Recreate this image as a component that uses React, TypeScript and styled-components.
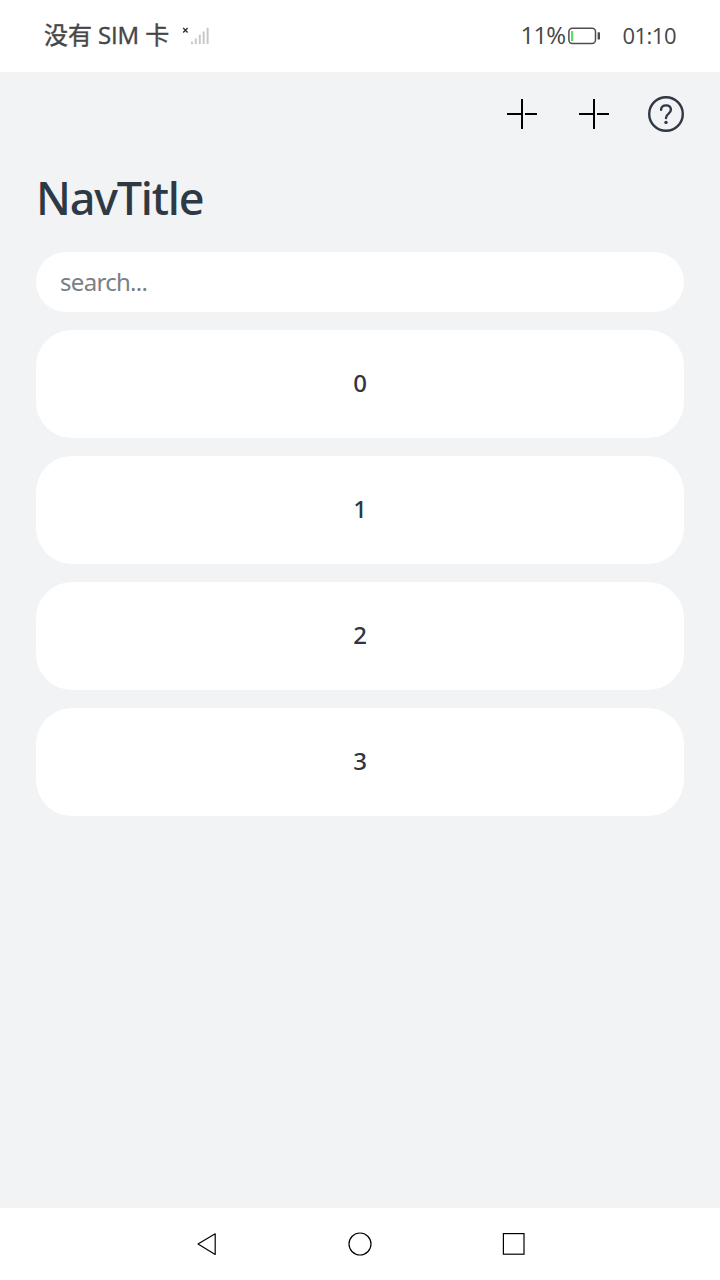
import React from "react";
import styled, { createGlobalStyle } from "styled-components";

const GlobalStyle = createGlobalStyle`
  * { box-sizing: border-box; }
  body {
    margin: 0;
    background: #f1f3f5;
    font-family: "Noto Sans", "Noto Sans CJK SC", sans-serif;
  }
`;

const Screen = styled.div`
  display: flex;
  flex-direction: column;
  width: 720px;
  height: 1280px;
  background: #f1f3f5;
  overflow: hidden;
`;

const StatusBar = styled.header`
  display: flex;
  align-items: center;
  justify-content: space-between;
  height: 72px;
  padding: 0 44px;
  background: #fff;
  color: #464646;
`;

const StatusGroup = styled.div`
  display: flex;
  align-items: center;
`;

const StatusText = styled.span<{ $size: number; $spacing?: number; $stroke?: number }>`
  padding-bottom: 2px;
  font-family: "Open Sans", "Noto Sans CJK SC", sans-serif;
  font-size: ${(p) => p.$size}px;
  font-weight: 400;
  -webkit-text-stroke: ${(p) => p.$stroke ?? 0}px currentColor;
  letter-spacing: ${(p) => p.$spacing ?? 0}px;
  line-height: 32px;
  white-space: pre;
`;

const SignalIcon = styled.svg`
  margin-left: 13px;
`;

const BatteryIcon = styled.svg`
  margin: 0 21px 0 3px;
`;

const Content = styled.main`
  flex: 1;
  display: flex;
  flex-direction: column;
  padding: 0 36px;
`;

const Toolbar = styled.div`
  display: flex;
  align-items: center;
  justify-content: flex-end;
  gap: 36px;
  height: 84px;
`;

const IconButton = styled.button`
  display: flex;
  width: 36px;
  height: 36px;
  padding: 0;
  border: 0;
  background: none;
`;

const Title = styled.h1`
  height: 84px;
  margin: 0 0 12px;
  font-size: 45px;
  font-weight: 500;
  line-height: 84px;
  letter-spacing: -1.2px;
  color: #2f3946;
`;

const SearchField = styled.input`
  height: 60px;
  padding: 0 24px 2px;
  border: 0;
  border-radius: 30px;
  outline: 0;
  background: #fff;
  font: 400 24px "Noto Sans", sans-serif;
  letter-spacing: -0.7px;
  &::placeholder {
    color: #7b8086;
    opacity: 1;
  }
`;

const List = styled.ul`
  display: flex;
  flex-direction: column;
  gap: 18px;
  margin: 18px 0 0;
  padding: 0;
  list-style: none;
`;

const Card = styled.li`
  height: 108px;
  border-radius: 36px;
  background: #fff;
  color: #2f3640;
  font-size: 24px;
  font-weight: 500;
  line-height: 106px;
  text-align: center;
`;

const NavBar = styled.nav`
  display: flex;
  align-items: center;
  justify-content: center;
  gap: 118px;
  height: 72px;
  background: #fff;
`;

const Plus = () => (
  <svg width="36" height="36" viewBox="0 0 36 36" shapeRendering="crispEdges">
    <path d="M17 3h2v30h-2zM3 17h14v2H3zM21 17h12v2H21z" fill="#000" />
  </svg>
);

const Help = () => (
  <svg width="36" height="36" viewBox="0 0 36 36" fill="none" stroke="#303844" strokeWidth="2.4">
    <circle cx="18" cy="18" r="16.8" />
    <path
      d="M13.1 13.7C13.1 11 15 9.4 18 9.4s4.9 1.8 4.9 4.4c0 2-1.1 3-2.5 4.1-1.6 1.2-2.4 2.1-2.4 4.1"
      strokeLinecap="round"
    />
    <circle cx="18" cy="26.4" r="1.7" fill="#303844" stroke="none" />
  </svg>
);

const App = () => (
  <Screen>
    <GlobalStyle />
    <StatusBar>
      <StatusGroup>
        <StatusText $size={24} $stroke={0.4} $spacing={-0.1}>没有 SIM 卡</StatusText>
        <SignalIcon width="28" height="20" viewBox="0 0 28 20">
          <path d="M1.2 2l4.4 4.4m0-4.4l-4.4 4.4" stroke="#333" strokeWidth="1.4" />
          <path d="M9 15.6h2V18H9zM12.8 12.4h2V18h-2zM16.8 8.8h2V18h-2zM20.7 5.4h2V18h-2zM24.6 1.8h2V18h-2z" fill="#c8c8c8" />
        </SignalIcon>
      </StatusGroup>
      <StatusGroup>
        <StatusText $size={24} $spacing={-0.8}>11%</StatusText>
        <BatteryIcon width="33" height="18" viewBox="0 0 33 18">
          <rect x="0.9" y="1.2" width="26.6" height="15.2" rx="3.4" fill="none" stroke="#4d4d4d" strokeWidth="1.5" />
          <rect x="3" y="4" width="2.2" height="10" rx="0.5" fill="#5be065" />
          <rect x="29.6" y="5.2" width="2.4" height="7.4" rx="0.6" fill="#4d4d4d" />
        </BatteryIcon>
        <StatusText $size={22} $spacing={-0.5}>01:10</StatusText>
      </StatusGroup>
    </StatusBar>
    <Content>
      <Toolbar>
        <IconButton aria-label="Add"><Plus /></IconButton>
        <IconButton aria-label="Add"><Plus /></IconButton>
        <IconButton aria-label="Help"><Help /></IconButton>
      </Toolbar>
      <Title>NavTitle</Title>
      <SearchField placeholder="search..." />
      <List>
        {[0, 1, 2, 3].map((n) => (
          <Card key={n}>{n}</Card>
        ))}
      </List>
    </Content>
    <NavBar>
      <svg width="36" height="36" viewBox="0 0 36 36" fill="none" stroke="#000" strokeWidth="1.2">
        <path d="M27.2 7.8v20.6L10 18.1z" strokeLinejoin="round" />
      </svg>
      <svg width="36" height="36" viewBox="0 0 36 36" fill="none" stroke="#000" strokeWidth="1.2">
        <circle cx="18" cy="18" r="11" />
      </svg>
      <svg width="36" height="36" viewBox="0 0 36 36" fill="none" stroke="#000" strokeWidth="1.2">
        <rect x="7.4" y="7.6" width="20.6" height="20.6" />
      </svg>
    </NavBar>
  </Screen>
);

export default App;
